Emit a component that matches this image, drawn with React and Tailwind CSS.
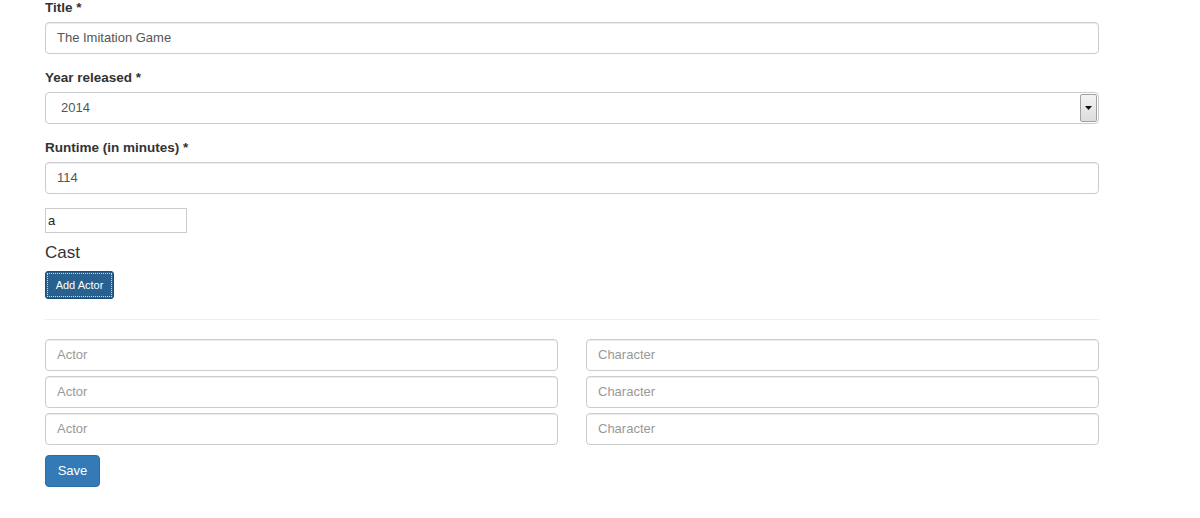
import React from "react";

const font = { fontFamily: '"Liberation Sans", Arial, sans-serif' };

function Label({ children }) {
  return (
    <div className="h-[20px] mb-[5px] text-[13.5px] leading-[21px] font-bold text-[#333]">{children}</div>
  );
}

function TextBox({ value, placeholder }) {
  return (
    <div className="h-[32px] w-full rounded-[4px] border border-[#ccc] bg-white px-[11px] flex items-center text-[13px] shadow-[inset_0_1px_1px_rgba(0,0,0,0.075)]">
      {value ? <span className="text-[#555]">{value}</span> : <span className="text-[#999]">{placeholder}</span>}
    </div>
  );
}

export default function App() {
  return (
    <div style={font} className="w-[1200px] h-[518px] bg-white overflow-hidden">
      <div className="ml-[45px] w-[1054px] -mt-[3px]">
        <Label>Title *</Label>
        <TextBox value="The Imitation Game" />
        <div className="h-[13px]" />
        <Label>Year released *</Label>
        <div className="h-[32px] w-full rounded-[4px] border border-[#ccc] bg-white flex items-stretch text-[13px]">
          <div className="flex-1 pl-[15px] flex items-center text-[#555]">2014</div>
          <div className="w-[17px] my-[1px] mr-[1px] border border-[#a0a0a0] rounded-[2px] bg-gradient-to-b from-[#f4f4f4] to-[#dcdcdc] flex items-center justify-center">
            <svg width="7" height="4" viewBox="0 0 7 4"><path d="M0 0H7L3.5 4Z" fill="#111" /></svg>
          </div>
        </div>
        <div className="h-[13px]" />
        <Label>Runtime (in minutes) *</Label>
        <TextBox value="114" />
        <div className="h-[14px]" />
        <div className="h-[25px] w-[142px] border border-[#ccc] bg-white pl-[2px] flex items-center text-[13px] text-[#222]">a</div>
        <div className="mt-[9px] h-[22px] text-[17px] leading-[22px] text-[#333]">Cast</div>
        <div className="mt-[7px] h-[28px] w-[69px] rounded-[3px] bg-[#286090] border border-[#204d74] p-[1px]">
          <div className="h-full w-full border border-dotted border-[#cfd8e0] flex items-center justify-center text-[11px] text-white">Add Actor</div>
        </div>
        <div className="mt-[20px] border-t border-[#eee]" />
        <div className="mt-[19px] flex flex-col gap-[5px]">
          {[0, 1, 2].map((i) => (
            <div key={i} className="flex gap-[28px]">
              <div className="w-[513px]"><TextBox placeholder="Actor" /></div>
              <div className="flex-1"><TextBox placeholder="Character" /></div>
            </div>
          ))}
        </div>
        <div className="mt-[10px] h-[32px] w-[55px] rounded-[4px] bg-[#337ab7] border border-[#2e6da4] flex items-center justify-center text-[13px] text-white">Save</div>
      </div>
    </div>
  );
}
